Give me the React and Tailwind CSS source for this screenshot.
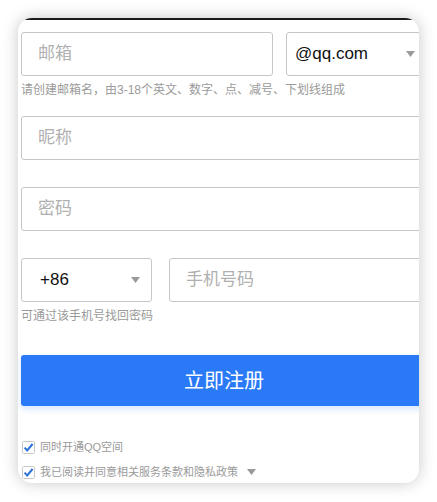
import React from "react";

const font = { fontFamily: '"Liberation Sans", Arial, "Noto Sans CJK SC", sans-serif' };

function Arrow({ className }) {
    return (
        <svg width="9" height="6" viewBox="0 0 9 6" className={className}>
            <path d="M0 0 L9 0 L4.5 6 Z" fill="#9a9a9a" />
        </svg>
    );
}

function Check() {
    return (
        <svg width="13" height="13" viewBox="0 0 13 13" className="shrink-0">
            <rect x="0.5" y="0.5" width="12" height="12" rx="1" fill="#fff" stroke="#c9c9c9" />
            <path d="M2.6 6.6 L5.2 9.4 L10.6 3" fill="none" stroke="#2b73d8" strokeWidth="2" />
        </svg>
    );
}

export default function App() {
    return (
        <div className="min-h-screen bg-white pt-[18px] pl-[18px]" style={font}>
            <div className="w-[401px] h-[465px] rounded-[14px] overflow-hidden bg-white shadow-[0_0_16px_rgba(0,0,0,0.22)]">
                <div className="h-[2px] bg-[#1c1c1c]" />
                <div className="pl-[3px] w-[409px]">
                    <div className="mt-[12px] flex gap-[13px] h-[44px]">
                        <div className="w-[252px] border border-[#c6c6c6] rounded-[3px] flex items-center pl-[16px] text-[17px] text-[#b0b0b0]">
                            邮箱
                        </div>
                        <div className="w-[141px] border border-[#c6c6c6] rounded-[3px] flex items-center justify-between pl-[8px] pr-[11px] text-[17px] text-[#111]">
                            <span>@qq.com</span>
                            <Arrow />
                        </div>
                    </div>
                    <p className="mt-[6px] h-[16px] leading-[16px] text-[12px] text-[#9a9a9a]">
                        请创建邮箱名，由3-18个英文、数字、点、减号、下划线组成
                    </p>

                    <div className="mt-[18px] h-[44px] border border-[#c6c6c6] rounded-[3px] flex items-center pl-[16px] text-[17px] text-[#b0b0b0]">
                        昵称
                    </div>

                    <div className="mt-[27px] h-[44px] border border-[#c6c6c6] rounded-[3px] flex items-center pl-[16px] text-[17px] text-[#b0b0b0]">
                        密码
                    </div>

                    <div className="mt-[27px] flex gap-[17px] h-[44px]">
                        <div className="w-[131px] border border-[#c6c6c6] rounded-[3px] flex items-center justify-between pl-[18px] pr-[11px] text-[17px] text-[#111]">
                            <span>+86</span>
                            <Arrow />
                        </div>
                        <div className="flex-1 border border-[#c6c6c6] rounded-[3px] flex items-center pl-[16px] text-[17px] text-[#b0b0b0]">
                            手机号码
                        </div>
                    </div>
                    <p className="mt-[6px] h-[16px] leading-[16px] text-[12px] text-[#9a9a9a]">
                        可通过该手机号找回密码
                    </p>

                    <button className="mt-[31px] w-full h-[51px] rounded-[3px] bg-[#2a7af8] text-white text-[20px] shadow-[0_3px_6px_rgba(42,122,248,0.2)]">
                        立即注册
                    </button>

                    <div className="mt-[33px] flex items-center gap-[5px] h-[16px] pl-[1px] text-[11px] text-[#9a9a9a]">
                        <Check />
                        <span>同时开通QQ空间</span>
                    </div>
                    <div className="mt-[9px] flex items-center gap-[5px] h-[16px] pl-[1px] text-[11px] text-[#9a9a9a]">
                        <Check />
                        <span>我已阅读并同意相关服务条款和隐私政策</span>
                        <Arrow className="ml-[4px]" />
                    </div>
                </div>
            </div>
        </div>
    );
}
